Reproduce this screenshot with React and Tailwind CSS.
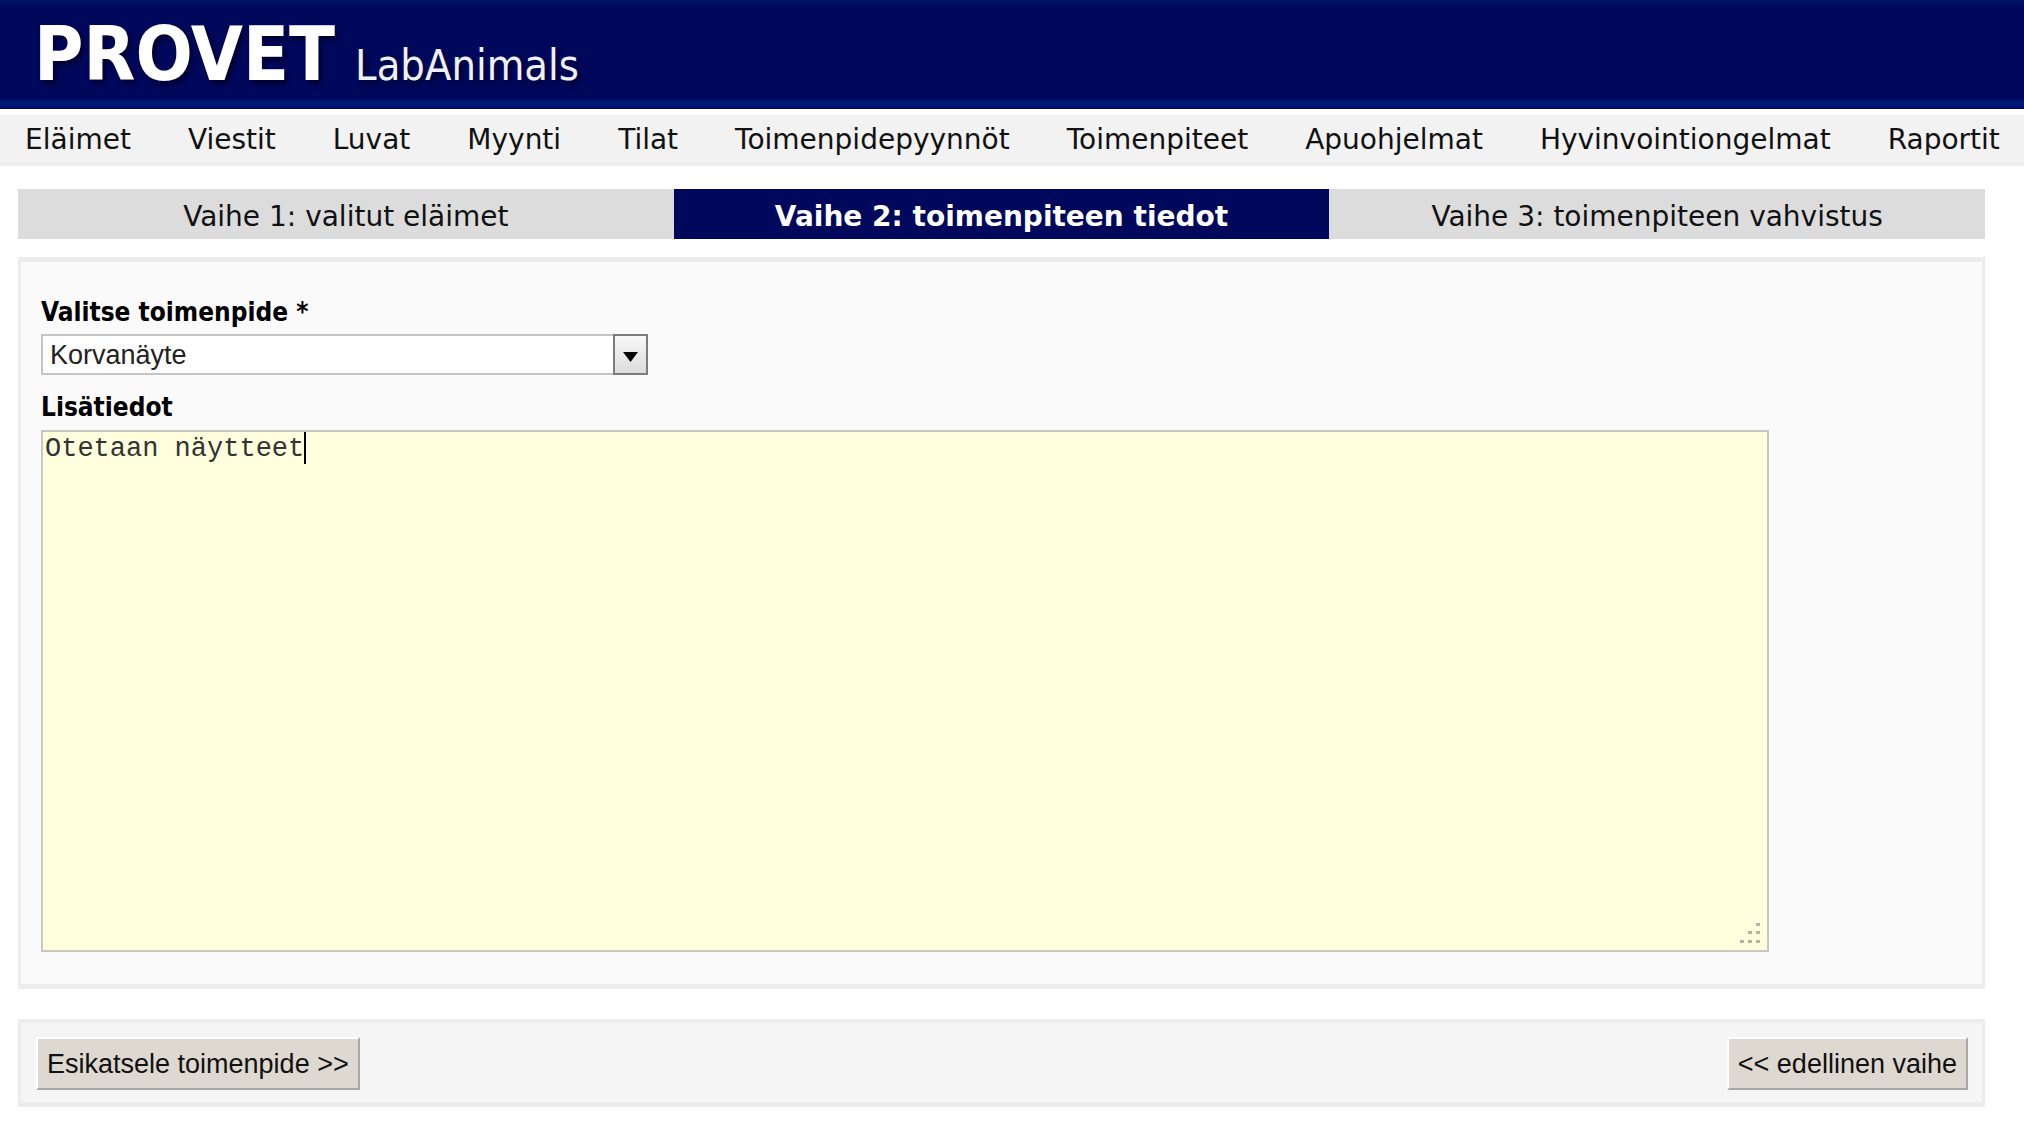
import { useState } from 'react';

const menuItems = [
  'Eläimet',
  'Viestit',
  'Luvat',
  'Myynti',
  'Tilat',
  'Toimenpidepyynnöt',
  'Toimenpiteet',
  'Apuohjelmat',
  'Hyvinvointiongelmat',
  'Raportit',
];

const steps = [
  'Vaihe 1: valitut eläimet',
  'Vaihe 2: toimenpiteen tiedot',
  'Vaihe 3: toimenpiteen vahvistus',
];

const Header = () => (
  <header className="flex h-[109px] items-baseline gap-5 bg-[linear-gradient(to_bottom,#001362_0,#00085c_8px,#00085c_98px,#001e74_103px,#000c70_107px,#00066c_109px)] pl-[34px] pt-3 font-['DejaVu_Sans_Condensed','DejaVu_Sans',sans-serif] text-white [text-shadow:3px_4px_5px_#000030]">
    <h1 className="text-[75px] leading-[84px] font-bold">PROVET</h1>
    <span className="text-[43px] leading-[84px] text-[#eef0fa]">LabAnimals</span>
  </header>
);

const Menu = () => (
  <nav className="mt-1.5 flex h-[51px] items-center gap-[57px] overflow-hidden border-b-4 border-[#eeeeee] bg-[#f2f2f2] pt-0.5 pl-[25px] whitespace-nowrap">
    {menuItems.map((item) => (
      <a key={item} href="#" className="text-[28px] leading-8 text-[#111111]">
        {item}
      </a>
    ))}
  </nav>
);

const Steps = ({ current }) => (
  <ol className="grid grid-cols-3 text-center text-[28px] leading-8">
    {steps.map((step, index) => (
      <li
        key={step}
        aria-current={index === current ? 'step' : undefined}
        className={`pt-3 pb-1.5 ${
          index === current ? 'bg-[#00085c] font-bold text-white' : 'bg-[#dcdcdc] text-[#111111]'
        }`}
      >
        {step}
      </li>
    ))}
  </ol>
);

const ClassicButton = ({ children }) => (
  <button
    type="button"
    className="h-[53px] border-2 border-t-white border-l-white border-r-[#aaa8a4] border-b-[#aaa8a4] bg-[#ddd8d0] px-[9px] font-['Liberation_Sans',sans-serif] text-[27px] leading-8 text-[#111111]"
  >
    {children}
  </button>
);

// Dotted resize corner of the text box
const ResizeGrip = () => (
  <svg className="pointer-events-none absolute right-[7px] bottom-1.5 h-6 w-6" viewBox="0 0 24 24" fill="#b4b4a0">
    <rect x="18" y="1" width="4" height="3" />
    <rect x="10" y="9" width="4" height="3" />
    <rect x="18" y="9" width="4" height="3" />
    <rect x="2" y="18" width="4" height="3" />
    <rect x="10" y="18" width="4" height="3" />
    <rect x="18" y="18" width="4" height="3" />
  </svg>
);

const App = () => {
  const [procedure, setProcedure] = useState('Korvanäyte');
  const [details, setDetails] = useState('Otetaan näytteet');
  const [touched, setTouched] = useState(false);

  return (
    <div className="min-h-screen bg-white font-['DejaVu_Sans',sans-serif] text-black">
      <Header />
      <Menu />

      <main className="mt-[23px] mr-[39px] ml-[18px]">
        <Steps current={1} />

        <form onSubmit={(e) => e.preventDefault()}>
          <section className="mt-[18px] border-x-3 border-y-5 border-[#ececec] bg-[#fafafa] px-5 pt-[34px] pb-8">
            <label htmlFor="procedure" className="block font-['DejaVu_Sans_Condensed','DejaVu_Sans',sans-serif] text-[26px] leading-8 font-bold">
              Valitse toimenpide *
            </label>
            <div className="relative mt-1.5 w-[607px] max-w-full">
              <select
                id="procedure"
                value={procedure}
                onChange={(e) => setProcedure(e.target.value)}
                className="block h-[41px] w-full appearance-none border-2 border-[#c4c4c4] bg-white pl-[7px] font-['Liberation_Sans',sans-serif] text-[27px] leading-8 text-[#222222]"
              >
                <option>Korvanäyte</option>
              </select>
              <span className="pointer-events-none absolute inset-y-0 right-0 flex w-[35px] items-center justify-center border-2 border-[#7c7c7c] bg-linear-to-b from-[#f8f8f8] to-[#dcdcdc]">
                <svg className="mt-1 h-[10px] w-[15px]" viewBox="0 0 15 10">
                  <path d="M0 0h15L7.5 10z" />
                </svg>
              </span>
            </div>

            <label htmlFor="details" className="mt-4 block font-['DejaVu_Sans_Condensed','DejaVu_Sans',sans-serif] text-[26px] leading-8 font-bold">
              Lisätiedot
            </label>
            <div className="relative mt-[7px] mr-[193px]">
              <textarea
                id="details"
                value={details}
                onFocus={() => setTouched(true)}
                onChange={(e) => setDetails(e.target.value)}
                className="block h-[522px] w-full resize-none border-2 border-[#c8c8c0] bg-[#ffffde] px-0.5 font-['Liberation_Mono',monospace] text-[27px] leading-[34px] text-[#333333] outline-none"
              />
              {!touched && <span className="absolute top-0.5 left-[263px] h-8 w-0.5 bg-black" />}
              <ResizeGrip />
            </div>
          </section>

          <section className="mt-[30px] flex justify-between border-x-3 border-t-4 border-b-5 border-[#ececec] bg-[#f5f5f5] pt-3.5 pr-3.5 pb-3 pl-[15px]">
            <ClassicButton>Esikatsele toimenpide &gt;&gt;</ClassicButton>
            <ClassicButton>&lt;&lt; edellinen vaihe</ClassicButton>
          </section>
        </form>
      </main>
    </div>
  );
};

export default App;
